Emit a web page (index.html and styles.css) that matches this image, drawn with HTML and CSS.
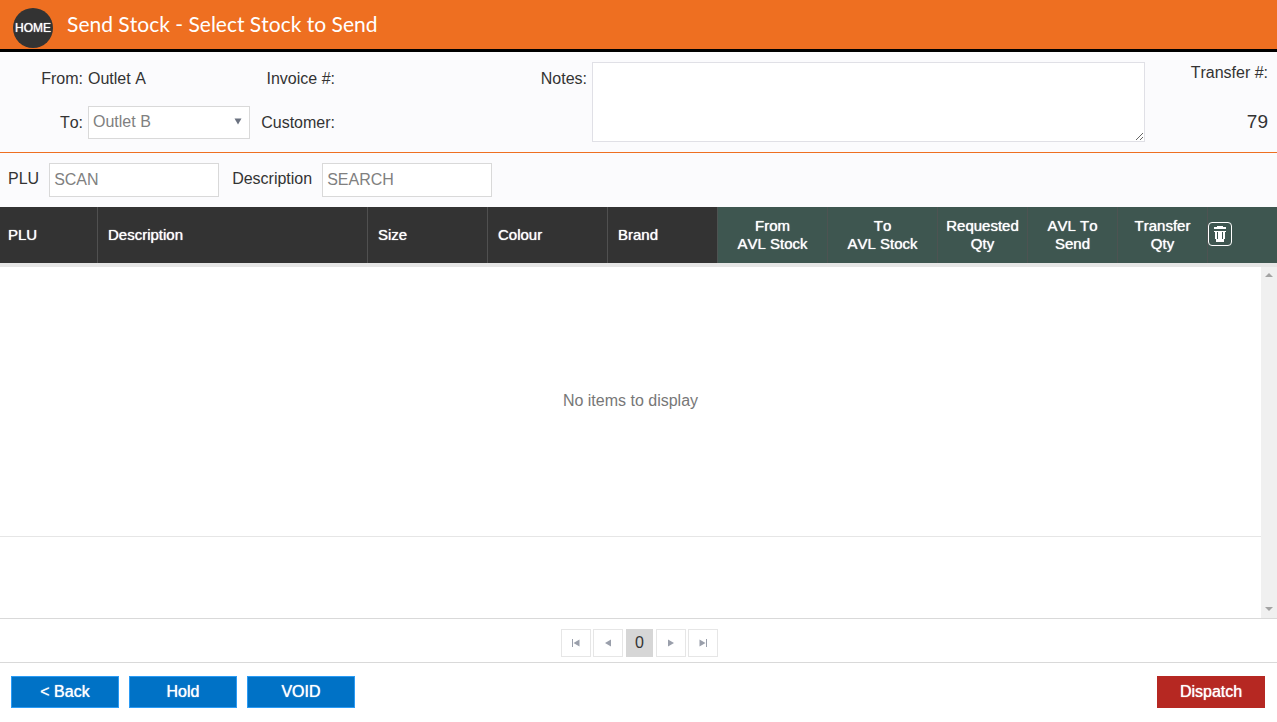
FILE: index.html
```html
<!DOCTYPE html>
<html lang="en">
<head>
    <meta charset="UTF-8">
    <meta name="viewport" content="width=device-width, initial-scale=1.0">
    <title>Send Stock</title>
    <link rel="stylesheet" href="styles.css">
</head>
<body>

    <header class="top-bar">
        <a class="home" href="#">HOME</a>
        <h1>Send Stock - Select Stock to Send</h1>
    </header>

    <section class="details">
        <div class="fields">
            <span class="field-label">From:</span>
            <span>Outlet A</span>
            <label class="field-label" for="outletTo">To:</label>
            <div class="select-box">
                <select id="outletTo">
                    <option>Outlet B</option>
                </select>
                <svg class="arrow" width="8" height="7" viewBox="0 0 8 7"><path d="M0.5 0.5h7L4 6.5z" fill="#6b7280"/></svg>
            </div>
        </div>
        <div class="invoice">
            <span>Invoice #:</span>
            <span>Customer:</span>
        </div>
        <label class="notes-label" for="notes">Notes:</label>
        <textarea class="notes" id="notes"></textarea>
        <div class="transfer">
            <span>Transfer #:</span>
            <span class="transfer-no">79</span>
        </div>
    </section>

    <section class="search-bar">
        <label for="plu">PLU</label>
        <input type="text" id="plu" placeholder="SCAN">
        <label class="second" for="description">Description</label>
        <input type="text" id="description" placeholder="SEARCH">
    </section>

    <table class="grid-header">
        <thead>
            <tr>
                <th class="col-plu">PLU</th>
                <th class="col-description">Description</th>
                <th class="col-size">Size</th>
                <th class="col-size">Colour</th>
                <th class="col-brand">Brand</th>
                <th class="qty col-stock">From<br>AVL Stock</th>
                <th class="qty col-stock">To<br>AVL Stock</th>
                <th class="qty col-qty">Requested<br>Qty</th>
                <th class="qty col-qty">AVL To<br>Send</th>
                <th class="qty col-qty">Transfer<br>Qty</th>
                <th class="qty col-delete">
                    <button class="btn-trash" aria-label="Delete all">
                        <svg width="24" height="24" viewBox="0 0 24 24">
                            <rect x="0.5" y="0.5" width="23" height="23" rx="3.5" fill="none" stroke="#fff"/>
                            <path d="M9 4h6v1h3v2H6V5h3zM6 9h12v1h-1v7h-1v3H8v-3H7v-7H6z" fill="#fff"/>
                            <path d="M9.500 10v7M14.500 10v7" stroke="#3e5650"/>
                        </svg>
                    </button>
                </th>
            </tr>
        </thead>
    </table>

    <main class="grid-body">
        <div class="rows">
            <div class="empty">No items to display</div>
        </div>
        <div class="scroll-track">
            <svg width="8" height="4" viewBox="0 0 8 4"><path d="M0 4L4 0l4 4z" fill="#a3a3a3"/></svg>
            <svg width="8" height="4" viewBox="0 0 8 4"><path d="M0 0h8L4 4z" fill="#a3a3a3"/></svg>
        </div>
    </main>

    <nav class="pager">
        <button aria-label="First page"><svg width="8" height="8" viewBox="0 0 8 8"><path d="M0 0h1v8H0zM7.500 0.500v7L1.500 4z" fill="#9a9fab"/></svg></button>
        <button aria-label="Previous page"><svg width="8" height="8" viewBox="0 0 8 8"><path d="M7 0.500v7L1 4z" fill="#9a9fab"/></svg></button>
        <span class="page">0</span>
        <button aria-label="Next page"><svg width="8" height="8" viewBox="0 0 8 8"><path d="M1 0.500v7L7 4z" fill="#9a9fab"/></svg></button>
        <button aria-label="Last page"><svg width="8" height="8" viewBox="0 0 8 8"><path d="M7 0h1v8H7zM0.500 0.500v7L6.500 4z" fill="#9a9fab"/></svg></button>
    </nav>

    <footer class="actions">
        <button class="btn">&lt; Back</button>
        <button class="btn">Hold</button>
        <button class="btn">VOID</button>
        <button class="btn btn-dispatch">Dispatch</button>
    </footer>

</body>
</html>
```
FILE: styles.css
```css
* {
    box-sizing: border-box;
}

body {
    display: flex;
    flex-direction: column;
    min-height: 100vh;
    margin: 0;
    font-family: "Liberation Sans", Arial, sans-serif;
    font-size: 16px;
    font-kerning: none;
    line-height: 18px;
    color: #333;
    background: #fff;
}

button,
input,
select,
textarea {
    font: inherit;
    font-kerning: none;
}

.top-bar {
    display: flex;
    align-items: center;
    gap: 14px;
    height: 52px;
    padding: 6px 13px 0;
    color: #fff;
    background: #ee6f21;
    border-bottom: 3px solid #000;
}

.top-bar h1 {
    margin: 0 0 8px;
    font-family: "Segoe UI", Lato, sans-serif;
    font-size: 21px;
    font-weight: 400;
    line-height: 30px;
}

.home {
    width: 40px;
    height: 40px;
    border-radius: 50%;
    background: #333;
    color: #fff;
    font-size: 12px;
    line-height: 40px;
    text-align: center;
    text-decoration: none;
    text-shadow: 0 0 1px #fff;
}

.details {
    display: flex;
    padding: 10px 9px 10px 0;
    background: #fbfbfd;
    border-bottom: 1px solid #ee6f21;
}

.fields {
    display: grid;
    grid-template-columns: 83px 162px;
    grid-auto-rows: 33px;
    gap: 11px 5px;
    align-items: center;
}

.field-label {
    text-align: right;
}

.select-box {
    position: relative;
}

.select-box select {
    display: block;
    width: 100%;
    height: 33px;
    padding: 0 4px 2px;
    appearance: none;
    color: #808080;
    background: #fff;
    border: 1px solid #d9d9d9;
    border-radius: 0;
}

.arrow {
    position: absolute;
    top: 12px;
    right: 8px;
    pointer-events: none;
}

.invoice {
    display: grid;
    grid-template-rows: 33px 33px;
    row-gap: 11px;
    align-items: center;
    width: 85px;
    text-align: right;
}

.notes-label {
    width: 252px;
    line-height: 33px;
    text-align: right;
}

.notes {
    flex: 1;
    height: 80px;
    margin-left: 5px;
    border: 1px solid #e0e0e6;
    background: #fff;
}

.transfer {
    display: flex;
    flex-direction: column;
    gap: 30px;
    width: 123px;
    padding-top: 2px;
    text-align: right;
}

.transfer-no {
    font-size: 19px;
    line-height: 20px;
}

.search-bar {
    display: flex;
    align-items: center;
    height: 54px;
    padding: 0 8px;
    background: #fbfbfd;
}

.search-bar label {
    padding-bottom: 2px;
}

.search-bar .second {
    margin-left: 13px;
}

.search-bar input {
    width: 170px;
    height: 34px;
    margin-left: 10px;
    padding: 0 4px;
    color: #333;
    background: #fff;
    border: 1px solid #d9d9d9;
}

.search-bar input::placeholder {
    color: #808080;
}

.grid-header {
    width: 100%;
    table-layout: fixed;
    border-spacing: 0;
    border-bottom: 4px solid #e6e6e6;
}

.grid-header th {
    height: 56px;
    padding: 0 10px;
    color: #fff;
    background: #333;
    border-left: 1px solid #505050;
    font-size: 15px;
    font-weight: 400;
    text-align: left;
    text-shadow: 0 0 1px #fff;
}

.grid-header .col-plu {
    width: 97px;
    padding-left: 8px;
    border-left: none;
}

.grid-header .col-description {
    width: 270px;
}

.grid-header .col-size {
    width: 120px;
}

.grid-header .col-brand,
.grid-header .col-stock {
    width: 110px;
}

.grid-header .col-qty {
    width: 90px;
}

.grid-header .qty {
    padding: 0;
    background: #3e5650;
    border-color: #4d5352;
    text-align: center;
}

.grid-header .col-delete {
    text-align: left;
}

.btn-trash {
    display: block;
    margin-bottom: 2px;
    padding: 0;
    border: none;
    background: none;
    cursor: pointer;
}

.btn-trash svg {
    display: block;
}

.grid-body {
    display: flex;
    flex: 1;
}

.rows {
    flex: 1;
}

.empty {
    height: 270px;
    color: #777;
    line-height: 267px;
    text-align: center;
    border-bottom: 1px solid #e6e6e6;
}

.scroll-track {
    display: flex;
    flex-direction: column;
    align-items: center;
    justify-content: space-between;
    width: 16px;
    padding: 6px 0 7px;
    background: #f0f0f0;
}

.pager {
    display: flex;
    align-items: center;
    justify-content: center;
    gap: 2px;
    height: 45px;
    padding: 4px 0 0 2px;
    border-top: 1px solid #d9d9d9;
    border-bottom: 1px solid #d9d9d9;
}

.pager button {
    display: flex;
    align-items: center;
    justify-content: center;
    width: 30px;
    height: 28px;
    padding: 0;
    background: #fff;
    border: 1px solid #e6e6e6;
}

.page {
    width: 27px;
    margin: 0 1px;
    line-height: 28px;
    text-align: center;
    background: #d6d6d6;
}

.actions {
    display: flex;
    gap: 10px;
    padding: 13px 12px 14px 11px;
}

.btn {
    width: 108px;
    height: 32px;
    padding: 0;
    color: #fff;
    background: #0072c6;
    border: 1px solid #2a9bf5;
    text-shadow: 0 0 1px #fff;
    cursor: pointer;
}

.btn-dispatch {
    margin-left: auto;
    background: #b62822;
    border-color: #b62822;
}
```
